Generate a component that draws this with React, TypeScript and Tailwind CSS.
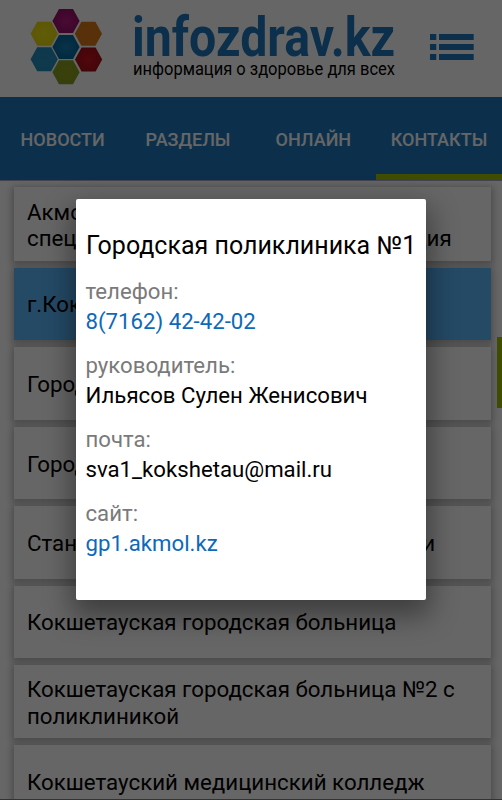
import { clsx } from 'clsx';

const tabs = ['НОВОСТИ', 'РАЗДЕЛЫ', 'ОНЛАЙН', 'КОНТАКТЫ'];

const clinics = [
  'Акмолинская областная специализированная мед. организация',
  'г.Кокшетау',
  'Городская поликлиника №1',
  'Городская поликлиника №2',
  'Станция скорой медицинской помощи',
  'Кокшетауская городская больница',
  'Кокшетауская городская больница №2 с поликлиникой',
  'Кокшетауский медицинский колледж',
];

const contacts = [
  { label: 'телефон:', value: '8(7162) 42-42-02', link: true },
  { label: 'руководитель:', value: 'Ильясов Сулен Женисович' },
  { label: 'почта:', value: 'sva1_kokshetau@mail.ru' },
  { label: 'сайт:', value: 'gp1.akmol.kz', link: true },
];

const cells = [
  { id: 'magenta', x: 66, y: 21, from: '#b81c80', to: '#98106b' },
  { id: 'yellow', x: 44.2, y: 33.8, from: '#f0e614', to: '#e8da10' },
  { id: 'orange', x: 88.4, y: 33.8, from: '#e07818', to: '#d87a18' },
  { id: 'blue', x: 66, y: 47, from: '#1480b4', to: '#0468a0' },
  { id: 'sky', x: 44.2, y: 59.3, from: '#2890bc', to: '#2490be' },
  { id: 'red', x: 88.6, y: 59.6, from: '#c81420', to: '#a80e18' },
  { id: 'green', x: 66, y: 72.2, from: '#94a01c', to: '#86a024' },
];

function Logo() {
  return (
    <svg width="410" height="97" viewBox="0 0 410 97">
      <defs>
        {cells.map(c => (
          <radialGradient key={c.id} id={c.id}>
            <stop offset="0" stopColor={c.from} />
            <stop offset="1" stopColor={c.to} />
          </radialGradient>
        ))}
      </defs>
      {cells.map(c => (
        <polygon
          key={c.id}
          points="-13.6,0 -7,-12 7,-12 13.6,0 7,12 -7,12"
          transform={`translate(${c.x} ${c.y})`}
          fill={`url(#${c.id})`}
        />
      ))}
      <text x="132" y="56" fontSize="55.500" fontWeight="700" fill="#1e78be" textLength="263" lengthAdjust="spacingAndGlyphs">infozdrav.kz</text>
      <text x="133" y="74.500" fontSize="17.500" fill="#000" textLength="262" lengthAdjust="spacingAndGlyphs">информация о здоровье для всех</text>
    </svg>
  );
}

function MenuIcon() {
  return (
    <svg width="44" height="26" viewBox="0 0 44 26" fill="#1e78be">
      {[0, 10, 20].map(y => (
        <g key={y}>
          <rect x="0" y={y} width="6.300" height="6" />
          <rect x="9" y={y} width="34.700" height="6" />
        </g>
      ))}
    </svg>
  );
}

export default function App() {
  return (
    <div className="relative h-[800px] w-[502px] overflow-hidden bg-white font-['Roboto',sans-serif] text-black">
      <header className="flex h-[97px] items-center">
        <Logo />
        <div className="ml-5 pb-[3px]">
          <MenuIcon />
        </div>
      </header>

      <nav className="grid h-[83px] grid-cols-[1fr_1fr_1fr_126px] bg-[#1e78be]">
        {tabs.map(tab => (
          <div
            key={tab}
            className={clsx(
              'flex items-center justify-center border-b-[6px] pt-[7px] text-[18px] font-medium whitespace-nowrap text-white',
              tab === 'КОНТАКТЫ' ? 'border-[#a0be00]' : 'border-transparent',
            )}
          >
            {tab}
          </div>
        ))}
      </nav>

      <main className="flex h-[620px] flex-col gap-[6.800px] overflow-hidden border-t border-b border-t-[#a0a8c8] border-b-[#808080] pt-[6px] pr-[11px] pl-[14px]">
        {clinics.map((name, i) => (
          <div
            key={name}
            className={clsx(
              'flex shrink-0 items-center px-[13px] text-[22.300px] leading-[26.500px] shadow-[0_2px_7px_2px_rgba(0,0,0,0.28)]',
              i === 0 ? 'h-[74px] [word-spacing:3.500px]' : 'h-[72.700px]',
              i === 1 ? 'bg-[#5ab9ff]' : 'bg-white',
              i === 1 || i === 5 ? 'pt-px' : 'pt-[2px]',
            )}
          >
            {name}
          </div>
        ))}
      </main>

      {/* Scroll handle */}
      <div className="absolute top-[337px] right-0 h-[71px] w-[5px] bg-[#a0be00]" />

      {/* Dialog */}
      <div className="absolute inset-0 flex bg-black/60 pt-[199px] pl-[76px]">
        <div className="h-[401px] w-[350px] rounded-[2px] bg-white px-[10px] pt-[31px] shadow-[0_12px_28px_4px_rgba(0,0,0,0.4)]">
          <h2 className="text-[25px] leading-[32px] whitespace-nowrap">Городская поликлиника №1</h2>
          <dl className="-ml-[0.500px] mt-[13.800px] flex flex-col gap-[14.200px] text-[22.200px] leading-[30px]">
            {contacts.map(c => (
              <div key={c.label}>
                <dt className="text-[#7a7a7a]">{c.label}</dt>
                <dd className={c.link ? 'text-[#0d69b9]' : 'text-black'}>{c.value}</dd>
              </div>
            ))}
          </dl>
        </div>
      </div>
    </div>
  );
}
